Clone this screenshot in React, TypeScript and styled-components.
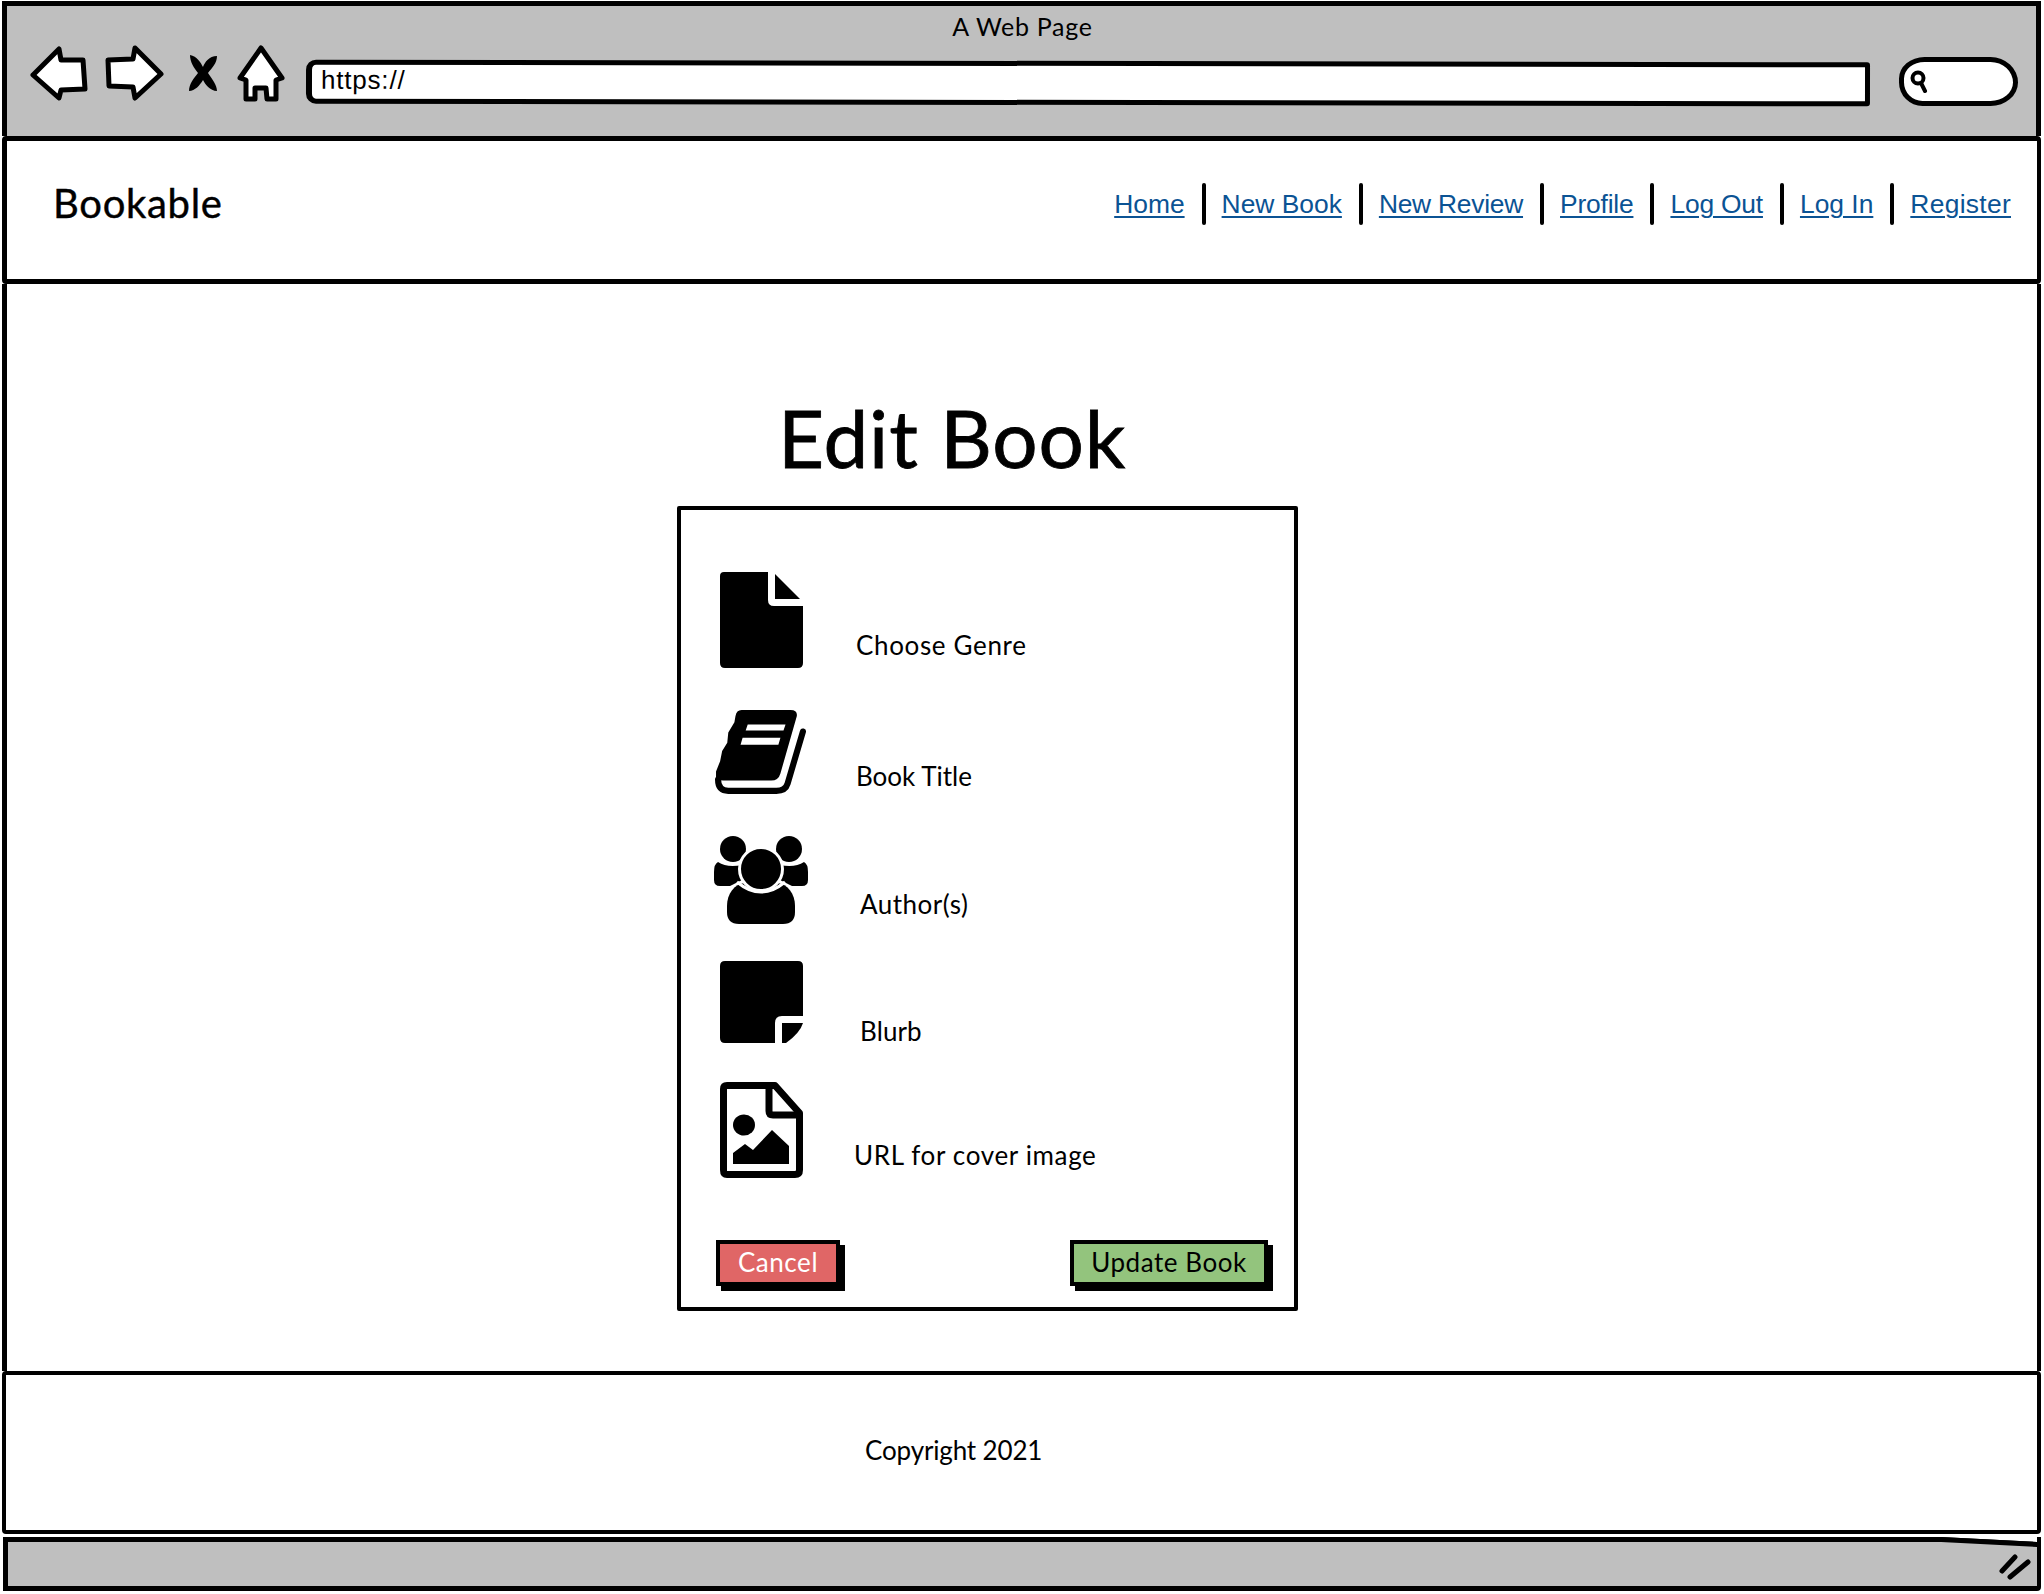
import React from 'react';
import styled, { createGlobalStyle } from 'styled-components';

const GlobalStyle = createGlobalStyle`
  html, body {
    margin: 0;
    padding: 0;
    background: #fff;
  }

  * {
    box-sizing: border-box;
  }
`;

const labelFont = `Lato, 'Noto Sans', sans-serif`;

const Page = styled.div`
  width: 2044px;
  height: 1594px;
  padding: 1px 3px 3px 2px;
  display: flex;
  flex-direction: column;
  font-family: ${labelFont};
  color: #000;
`;

const Chrome = styled.header`
  height: 135px;
  background: #bfbfbf;
  border: 5px solid #000;
  border-bottom: none;
`;

const WindowTitle = styled.div`
  height: 35px;
  padding-top: 5px;
  margin-left: 2px;
  text-align: center;
  font-size: 25px;
  line-height: 30px;
  letter-spacing: 0.7px;
`;

const Toolbar = styled.div`
  display: flex;
  align-items: center;
  height: 64px;
  padding-left: 23px;
`;

const NavIcon = styled.svg<{ $gap: number }>`
  flex: none;
  margin-right: ${({ $gap }) => $gap}px;
`;

const AddressBar = styled.div`
  width: 1564px;
  height: 44px;
  margin-top: 20px;
  margin-right: 29px;
  padding-left: 9px;
  background: #fff;
  border: 5px solid #000;
  border-left-width: 6px;
  border-radius: 10px 3px 3px 10px;
  font-family: 'Liberation Sans', Arial, sans-serif;
  font-size: 26px;
  line-height: 30px;
  letter-spacing: 0.8px;
  transform: rotate(0.1deg);
`;

const SearchBox = styled.div`
  width: 119px;
  height: 49px;
  margin-top: 16px;
  display: flex;
  align-items: center;
  padding-left: 6px;
  background: #fff;
  border: 5px solid #000;
  border-radius: 26px 28px 28px 24px / 22px 26px 24px 24px;
`;

const NavBar = styled.nav`
  height: 148px;
  display: flex;
  align-items: flex-start;
  justify-content: space-between;
  padding: 37px 26px 0 46px;
  background: #fff;
  border: 5px solid #000;
  border-right-width: 4px;
  border-radius: 4px;
`;

const Brand = styled.div`
  font-size: 40px;
  line-height: 50px;
  letter-spacing: 0.7px;
  -webkit-text-stroke: 0.4px #000;
`;

const LinkList = styled.div`
  display: flex;
  align-items: center;
  margin-top: 4px;
  height: 44px;
`;

const NavLink = styled.a<{ $tracking: number }>`
  font-family: 'Liberation Sans', Arial, sans-serif;
  font-size: 26.4px;
  line-height: 32px;
  letter-spacing: ${({ $tracking }) => $tracking}px;
  color: #0b5394;
  text-decoration: underline;
  text-underline-offset: 3px;
  text-decoration-thickness: 2px;
`;

const Divider = styled.span`
  width: 4px;
  height: 42px;
  margin: 0 16px 0 17px;
  background: #000;
  border-radius: 2px;
`;

const Main = styled.main`
  flex: 1;
  min-height: 0;
  padding: 97px 0 0 670px;
  background: #fff;
  border-left: 5px solid #000;
  border-right: 4px solid #000;
`;

const Heading = styled.h1`
  margin: 0 0 13px 101px;
  font-size: 80px;
  font-weight: 400;
  line-height: 112px;
  letter-spacing: 0.9px;
  -webkit-text-stroke: 0.8px #000;
`;

const FormCard = styled.form`
  width: 621px;
  height: 805px;
  padding: 62px 20px 0 33px;
  border: 4px solid #000;
  border-radius: 2px;
  display: flex;
  flex-direction: column;
`;

const FieldRow = styled.div<{ $height: number }>`
  height: ${({ $height }) => $height}px;
  display: flex;
  align-items: flex-start;
`;

const IconCell = styled.div`
  width: 96px;
  display: flex;
  justify-content: center;
  margin-left: -1px;
`;

const FieldLabel = styled.label<{ $left: number; $top: number; $tracking: number }>`
  margin-left: ${({ $left }) => $left}px;
  margin-top: ${({ $top }) => $top}px;
  font-size: 26px;
  line-height: 32px;
  letter-spacing: ${({ $tracking }) => $tracking}px;
`;

const ButtonRow = styled.div`
  display: flex;
  justify-content: space-between;
  margin: 0 6px 0 2px;
  padding-top: 2px;
`;

const SketchButton = styled.button<{ $fill: string; $ink: string; $width: number }>`
  width: ${({ $width }) => $width}px;
  height: 46px;
  padding: 0 0 2px;
  background: ${({ $fill }) => $fill};
  color: ${({ $ink }) => $ink};
  border: 4px solid #000;
  box-shadow: 5px 5px 0 #000;
  font-family: ${labelFont};
  font-size: 26px;
  line-height: 34px;
  letter-spacing: 0.55px;
`;

const Footer = styled.footer`
  height: 163px;
  padding: 59px 0 0 859px;
  background: #fff;
  border: 4px solid #000;
  border-radius: 4px;
  font-size: 26px;
  line-height: 32px;
  letter-spacing: -0.15px;
`;

const StatusBar = styled.div`
  position: relative;
  height: 54px;
  margin: 3px 0 0 1px;
  background: #bfbfbf;
  border: 5px solid #000;
  border-right-width: 4px;
  border-radius: 0 0 4px 0;
`;

const StatusSlant = styled.svg`
  position: absolute;
  top: -5px;
  right: 0;
`;

const Grip = styled.svg`
  position: absolute;
  right: 5px;
  bottom: 6px;
`;

const links = [
  { label: 'Home', tracking: 0 },
  { label: 'New Book', tracking: 0 },
  { label: 'New Review', tracking: -0.25 },
  { label: 'Profile', tracking: -0.2 },
  { label: 'Log Out', tracking: -0.2 },
  { label: 'Log In', tracking: 0 },
  { label: 'Register', tracking: 0.3 },
];

const BackArrow = () => (
  <NavIcon $gap={16} width="58" height="56" viewBox="0 0 58 56">
    <path d="M3 30 L29 4 L31 15 L53 15 L55 44 L31 45 L29 53 Z" fill="#fff" stroke="#000" strokeWidth="5" strokeLinejoin="round" />
  </NavIcon>
);

const ForwardArrow = () => (
  <NavIcon $gap={23} width="60" height="56" viewBox="0 0 60 56">
    <path d="M31 3 L57 29 L31 53 L29 42 L5 41 L4 15 L29 14 Z" fill="#fff" stroke="#000" strokeWidth="5" strokeLinejoin="round" />
  </NavIcon>
);

const CloseMark = () => (
  <NavIcon $gap={17} width="32" height="40" viewBox="0 0 32 40">
    <path d="M3 2 C10 3 14 10 16 14 C18 9 22 3 30 3 C30 10 25 15 21 20 C25 26 30 32 30 38 C23 38 18 31 16 27 C13 32 8 38 2 38 C2 31 7 25 11 20 C7 15 3 9 3 2 Z" fill="#000" />
  </NavIcon>
);

const HomeIcon = () => (
  <NavIcon $gap={20} width="50" height="58" viewBox="0 0 50 58">
    <path d="M25 4 L46 34 L40 36 L40 55 L31 55 L30 44 L19 44 L19 55 L10 55 L10 36 L4 34 Z" fill="#fff" stroke="#000" strokeWidth="5" strokeLinejoin="round" />
  </NavIcon>
);

const SearchGlass = () => (
  <svg width="18" height="24" viewBox="0 0 18 24">
    <circle cx="8" cy="9" r="5.5" fill="none" stroke="#000" strokeWidth="4" />
    <path d="M11 14 L15 22" stroke="#000" strokeWidth="4" strokeLinecap="round" />
  </svg>
);

const DocumentIcon = () => (
  <svg width="83" height="96" viewBox="0 0 83 96">
    <path d="M4 0 H48 V28 Q48 34 54 34 H83 V91 Q83 96 78 96 H5 Q0 96 0 91 V4 Q0 0 4 0 Z" fill="#000" />
    <path d="M55 2 L80 27 H55 Z" fill="#000" />
  </svg>
);

const BookIcon = () => (
  <svg width="92" height="85" viewBox="0 0 90 83">
    <path d="M26 0 H74 Q81 0 80 6 L64 62 Q62 69 55 69 H8 Q2 69 1 66 L1 60 L5 50 L7 40 L12 32 L13 22 L19 12 L20 6 Q21 0 26 0 Z" fill="#000" />
    <path d="M3 68 Q3 79 13 79 H60 Q69 79 71 72 L86 21" fill="none" stroke="#000" strokeWidth="6" strokeLinecap="round" />
    <path d="M32 14 H69 L67 20 H30 Z M27 27 H64 L62 34 H25 Z" fill="#fff" />
  </svg>
);

const PeopleIcon = () => (
  <svg width="94" height="89" viewBox="0 0 94 89">
    <circle cx="19" cy="13" r="13" fill="#000" />
    <circle cx="75" cy="13" r="13" fill="#000" />
    <path d="M4 26 C10 30 18 31 28 29 V44 L16 50 H6 Q0 50 0 44 V36 Q0 28 4 26 Z" fill="#000" />
    <path d="M90 26 C84 30 76 31 66 29 V44 L78 50 H88 Q94 50 94 44 V36 Q94 28 90 26 Z" fill="#000" />
    <path d="M13 70 C13 58 20 48 31 47 H63 C74 48 81 58 81 70 V76 Q81 88 69 88 H25 Q13 88 13 76 Z" fill="#000" />
    <circle cx="47" cy="33" r="21.5" fill="#000" stroke="#fff" strokeWidth="3" />
    <path d="M23 46 Q47 66 71 46" fill="none" stroke="#fff" strokeWidth="3" />
  </svg>
);

const NoteIcon = () => (
  <svg width="83" height="82" viewBox="0 0 83 82">
    <path d="M5 0 H78 Q83 0 83 5 V55 H62 Q55 55 55 62 V82 H5 Q0 82 0 77 V5 Q0 0 5 0 Z" fill="#000" />
    <path d="M62 62 H83 Q80 72 66 82 H62 Z" fill="#000" />
  </svg>
);

const ImageFileIcon = () => (
  <svg width="83" height="96" viewBox="0 0 83 96">
    <path d="M7 3.5 H55 L79.5 31 V88 Q79.5 92.5 75 92.5 H7 Q3.5 92.5 3.5 88 V7 Q3.5 3.5 7 3.5 Z" fill="#fff" stroke="#000" strokeWidth="7" strokeLinejoin="round" />
    <path d="M49 5 V29 Q49 33 53 33 H79" fill="none" stroke="#000" strokeWidth="7" />
    <ellipse cx="24" cy="43" rx="11" ry="10.5" fill="#000" />
    <path d="M13 82 V71 L25 62 L33 68 L52 48 L69 64 V82 Z" fill="#000" />
  </svg>
);

const fields = [
  { label: 'Choose Genre', height: 138, left: 47, top: 57, tracking: 0.65, icon: <DocumentIcon /> },
  { label: 'Book Title', height: 126, left: 47, top: 50, tracking: 0, icon: <BookIcon /> },
  { label: 'Author(s)', height: 125, left: 51, top: 52, tracking: 0.5, icon: <PeopleIcon /> },
  { label: 'Blurb', height: 121, left: 51, top: 54, tracking: 0.1, icon: <NoteIcon /> },
  { label: 'URL for cover image', height: 156, left: 45, top: 57, tracking: 0.65, icon: <ImageFileIcon /> },
];

const App = () => {
  return (
    <>
      <GlobalStyle />
      <Page>
        <Chrome>
          <WindowTitle>A Web Page</WindowTitle>
          <Toolbar>
            <BackArrow />
            <ForwardArrow />
            <CloseMark />
            <HomeIcon />
            <AddressBar>https://</AddressBar>
            <SearchBox>
              <SearchGlass />
            </SearchBox>
          </Toolbar>
        </Chrome>
        <NavBar>
          <Brand>Bookable</Brand>
          <LinkList>
            {links.map((link, index) => (
              <React.Fragment key={link.label}>
                {index > 0 && <Divider />}
                <NavLink href="#" $tracking={link.tracking}>
                  {link.label}
                </NavLink>
              </React.Fragment>
            ))}
          </LinkList>
        </NavBar>
        <Main>
          <Heading>Edit Book</Heading>
          <FormCard>
            {fields.map((field) => (
              <FieldRow key={field.label} $height={field.height}>
                <IconCell>{field.icon}</IconCell>
                <FieldLabel $left={field.left} $top={field.top} $tracking={field.tracking}>
                  {field.label}
                </FieldLabel>
              </FieldRow>
            ))}
            <ButtonRow>
              <SketchButton type="button" $fill="#e06666" $ink="#fff" $width={124}>
                Cancel
              </SketchButton>
              <SketchButton type="button" $fill="#93c47d" $ink="#000" $width={198}>
                Update Book
              </SketchButton>
            </ButtonRow>
          </FormCard>
        </Main>
        <Footer>Copyright 2021</Footer>
        <StatusBar>
          <StatusSlant width="96" height="10" viewBox="0 0 96 10">
            <path d="M0 0 H96 V5 Z" fill="#fff" />
            <path d="M0 0 L96 5 V10 L0 5 Z" fill="#000" />
          </StatusSlant>
          <Grip width="34" height="28" viewBox="0 0 34 28">
            <path d="M4 19 L17 5 M12 25 L30 10" stroke="#000" strokeWidth="5" strokeLinecap="round" />
          </Grip>
        </StatusBar>
      </Page>
    </>
  );
};

export default App;
